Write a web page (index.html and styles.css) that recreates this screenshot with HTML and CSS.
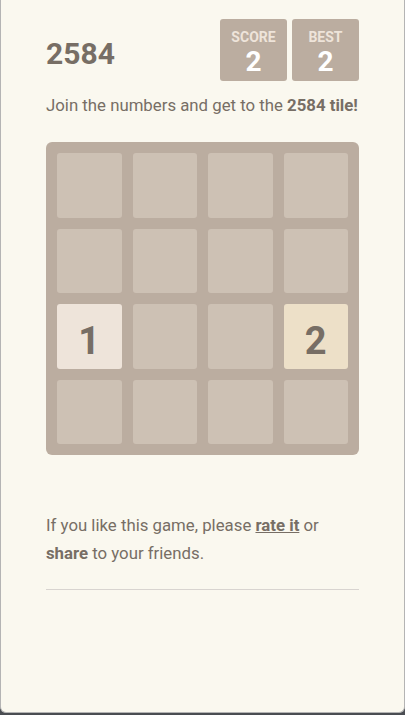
FILE: index.html
```html
<!DOCTYPE html>
<html lang="en">
  <head>
    <meta charset="UTF-8" />
    <meta name="viewport" content="width=device-width, initial-scale=1.0" />
    <title>2584</title>
    <link rel="stylesheet" href="styles.css">
  </head>
  <body>
    <div class="window">
      <div class="container">
        <div class="heading">
          <h1 class="title">2584</h1>
          <div class="scores">
            <div class="score-box">
              <div class="score-label">Score</div>
              <div class="score-value">2</div>
            </div>
            <div class="score-box">
              <div class="score-label">Best</div>
              <div class="score-value">2</div>
            </div>
          </div>
        </div>

        <p class="game-intro">Join the numbers and get to the <strong>2584 tile!</strong></p>

        <div class="grid">
          <div class="cell"></div>
          <div class="cell"></div>
          <div class="cell"></div>
          <div class="cell"></div>

          <div class="cell"></div>
          <div class="cell"></div>
          <div class="cell"></div>
          <div class="cell"></div>

          <div class="cell tile tile-1">1</div>
          <div class="cell"></div>
          <div class="cell"></div>
          <div class="cell tile tile-2">2</div>

          <div class="cell"></div>
          <div class="cell"></div>
          <div class="cell"></div>
          <div class="cell"></div>
        </div>

        <p class="game-explanation">
          If you like this game, please <a href="#">rate it</a> or
          <strong>share</strong> to your friends.
        </p>

        <hr>
      </div>
    </div>
  </body>
</html>
```

FILE: styles.css
```css
html {
  background: #4a4d52;
}

body {
  margin: 0;
  padding: 0;
  font-family: Roboto, "Helvetica Neue", Arial, sans-serif;
  font-size: 16.8px;
  line-height: 28px;
  color: #776e65;
}

.window {
  height: 713px;
  box-sizing: border-box;
  background: #faf8ef;
  border: 1px solid #b4b4b4;
  border-top: none;
  border-radius: 0 0 6px 6px;
}

.container {
  width: 313px;
  margin: 0 auto;
  padding-top: 19px;
}

.heading {
  display: flex;
  justify-content: space-between;
  align-items: flex-start;
}

.title {
  margin: 20px 0 0 0;
  font-size: 30px;
  line-height: 30px;
  font-weight: bold;
}

.scores {
  display: flex;
  gap: 5px;
}

.score-box {
  width: 67px;
  height: 62px;
  box-sizing: border-box;
  padding-top: 12px;
  background: #bbada0;
  border-radius: 3px;
  text-align: center;
}

.score-label {
  font-size: 14px;
  line-height: 13px;
  font-weight: bold;
  text-transform: uppercase;
  color: #eee4da;
}

.score-value {
  margin-top: 4px;
  font-size: 28px;
  line-height: 28px;
  font-weight: bold;
  color: white;
}

.game-intro {
  margin: 10px 0 0 0;
  white-space: nowrap;
}

.grid {
  margin-top: 23px;
  width: 313px;
  height: 313px;
  box-sizing: border-box;
  padding: 11px;
  display: grid;
  grid-template-columns: repeat(4, 1fr);
  grid-template-rows: repeat(4, 1fr);
  gap: 11px;
  background: #bbada0;
  border-radius: 6px;
}

.cell {
  background: #cdc1b4;
  border-radius: 3px;
}

.tile {
  display: flex;
  align-items: center;
  justify-content: center;
  padding-top: 10px;
  box-sizing: border-box;
  font-size: 38px;
  font-weight: bold;
  line-height: 1;
  color: #776e65;
}

.tile-1 {
  background: #eee4da;
}

.tile-2 {
  background: #ede0c8;
}

.game-explanation {
  margin: 56px 0 0 0;
}

.game-explanation a {
  color: #776e65;
  font-weight: bold;
  text-decoration: underline;
}

hr {
  margin: 22px 0 0 0;
  border: none;
  border-bottom: 1px solid #d8d4d0;
}
```
